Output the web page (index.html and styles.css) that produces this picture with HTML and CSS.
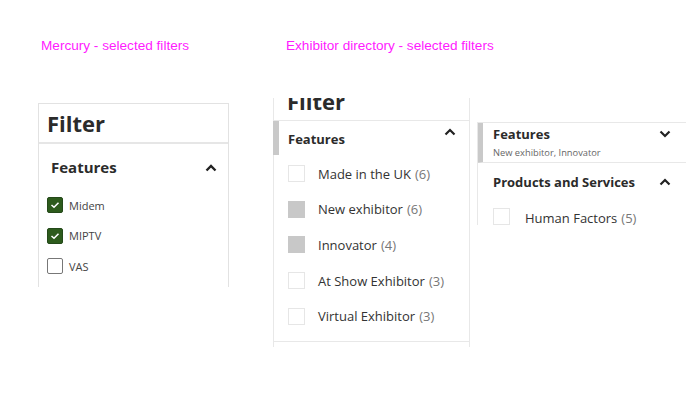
FILE: index.html
```html
<!DOCTYPE html>
<html>
<head>
<meta charset="utf-8">
<link rel="stylesheet" href="styles.css">
</head>
<body>
<div class="page">
  <section class="col col-mercury">
    <div class="caption">Mercury - selected filters</div>
    <div class="panel-m">
      <div class="m-head">Filter</div>
      <div class="m-section">
        <div class="m-section-head">
          <span>Features</span>
          <svg class="chev" width="12" height="8" viewBox="0 0 12 8"><polyline points="1.5,6.5 6,2 10.5,6.5" fill="none" stroke="#222" stroke-width="2.4"/></svg>
        </div>
        <div class="m-item"><span class="m-box checked"><svg width="10" height="8" viewBox="0 0 10 8"><polyline points="1.5,4 4,6.3 8.5,1.7" fill="none" stroke="#fff" stroke-width="1.5"/></svg></span>Midem</div>
        <div class="m-item"><span class="m-box checked"><svg width="10" height="8" viewBox="0 0 10 8"><polyline points="1.5,4 4,6.3 8.5,1.7" fill="none" stroke="#fff" stroke-width="1.5"/></svg></span>MIPTV</div>
        <div class="m-item"><span class="m-box"></span>VAS</div>
      </div>
    </div>
  </section>
  <section class="col col-exhib">
    <div class="caption">Exhibitor directory - selected filters</div>
    <div class="exhib-row">
      <div class="panel-e">
        <div class="e-head"><div class="e-head-text">Filter</div></div>
        <div class="e-section-head active">
          <span>Features</span>
          <svg class="chev-e" width="12" height="8" viewBox="0 0 12 8"><polyline points="1.5,6.5 6,2 10.5,6.5" fill="none" stroke="#222" stroke-width="2.2"/></svg>
        </div>
        <div class="e-items">
          <div class="e-item"><span class="e-box"></span>Made in the UK <span class="count">(6)</span></div>
          <div class="e-item"><span class="e-box sel"></span>New exhibitor <span class="count">(6)</span></div>
          <div class="e-item"><span class="e-box sel"></span>Innovator <span class="count">(4)</span></div>
          <div class="e-item"><span class="e-box"></span>At Show Exhibitor <span class="count">(3)</span></div>
          <div class="e-item"><span class="e-box"></span>Virtual Exhibitor <span class="count">(3)</span></div>
        </div>
        <div class="e-foot"></div>
      </div>
      <div class="panel-c">
        <div class="c-section-head active">
          <div class="c-title-row">
            <span>Features</span>
            <svg class="chev-c" width="12" height="8" viewBox="0 0 12 8"><polyline points="1.5,1.5 6,6 10.5,1.5" fill="none" stroke="#222" stroke-width="2.2"/></svg>
          </div>
          <div class="c-sub">New exhibitor, Innovator</div>
        </div>
        <div class="c-section">
          <div class="c-title-row c-title-2">
            <span>Products and Services</span>
            <svg class="chev-c" width="12" height="8" viewBox="0 0 12 8"><polyline points="1.5,6.5 6,2 10.5,6.5" fill="none" stroke="#222" stroke-width="2.2"/></svg>
          </div>
          <div class="c-item"><span class="e-box"></span>Human Factors <span class="count">(5)</span></div>
        </div>
      </div>
    </div>
  </section>
</div>
</body>
</html>
```

FILE: styles.css
```css
html, body {
  margin: 0;
  padding: 0;
  background: #fff;
}
body {
  width: 700px;
  height: 393px;
  overflow: hidden;
  font-family: "Open Sans", "Noto Sans", sans-serif;
  color: #333;
}
.page {
  display: flex;
  align-items: flex-start;
  padding-top: 38px;
}
.caption {
  font-family: "Liberation Sans", Arial, sans-serif;
  font-size: 13.6px;
  line-height: 15px;
  height: 15px;
  color: #ff1aff;
  white-space: nowrap;
}
.col-mercury {
  margin-left: 38px;
  width: 191px;
}
.col-mercury .caption {
  padding-left: 3px;
}
.panel-m {
  margin-top: 50px;
  box-sizing: border-box;
  height: 184px;
  border: 1px solid #e2e2e2;
  border-bottom: none;
}
.m-head {
  box-sizing: border-box;
  height: 40px;
  padding: 4px 0 0 8px;
  font-size: 22px;
  line-height: 30px;
  font-weight: 700;
  color: #2b2b2b;
  border-bottom: 2px solid #e6e6e6;
}
.m-section {
  padding: 12px 10px 0 8px;
}
.m-section-head {
  display: flex;
  align-items: center;
  justify-content: space-between;
  padding-left: 4px;
  height: 22px;
  font-size: 15px;
  font-weight: 700;
  color: #2b2b2b;
}
.m-section-head .chev {
  margin-right: 1px;
  margin-top: 1px;
}
.m-item {
  display: flex;
  align-items: center;
  height: 30.5px;
  font-size: 11px;
  color: #444;
}
.m-section-head + .m-item {
  margin-top: 12px;
}
.m-box {
  box-sizing: border-box;
  width: 16px;
  height: 16px;
  margin-right: 6px;
  border: 1px solid #777;
  border-radius: 2px;
  display: flex;
  align-items: center;
  justify-content: center;
  background: #fff;
}
.m-box.checked {
  background: #2d5b1c;
  border-color: #24491a;
}
.col-exhib {
  margin-left: 44px;
}
.col-exhib .caption {
  padding-left: 13px;
}
.exhib-row {
  display: flex;
  align-items: flex-start;
  margin-top: 45px;
}
.panel-e {
  box-sizing: border-box;
  width: 197px;
  height: 249px;
  border-left: 1px solid #e8e8e8;
  border-right: 1px solid #e8e8e8;
}
.e-head {
  height: 22px;
  overflow: hidden;
  border-bottom: 1px solid #e8e8e8;
}
.e-head-text {
  margin-top: -12px;
  padding-left: 13px;
  font-size: 22px;
  line-height: 30px;
  font-weight: 700;
  color: #2b2b2b;
}
.e-section-head {
  position: relative;
  display: flex;
  justify-content: space-between;
  height: 34px;
  padding: 0 13px 0 14px;
  font-size: 13px;
  font-weight: 700;
  color: #2b2b2b;
  line-height: 36px;
}
.e-section-head.active {
  border-left: 6px solid #c9c9c9;
  margin-left: -1px;
  padding-left: 9px;
}
.chev-e {
  margin-top: 7px;
}
.e-items {
  padding: 0 0 0 14px;
}
.e-item, .c-item {
  display: flex;
  align-items: center;
  height: 35.6px;
  font-size: 13px;
  color: #333;
  white-space: nowrap;
}
.e-items .e-item:first-child {
  margin-top: 1px;
}
.count {
  color: #777;
  margin-left: 4px;
}
.e-box {
  box-sizing: border-box;
  width: 17px;
  height: 17px;
  margin-right: 13px;
  border: 1px solid #e6e6e6;
  background: #fff;
  flex: none;
}
.e-box.sel {
  background: #c8c8c8;
  border-color: #c8c8c8;
}
.e-foot {
  margin-top: 7px;
  border-top: 1px solid #e8e8e8;
}
.panel-c {
  box-sizing: border-box;
  width: 209px;
  margin-left: 7px;
  margin-top: 24px;
  height: 103px;
  overflow: hidden;
  border-top: 1px solid #e8e8e8;
  border-left: 1px solid #e8e8e8;
}
.c-section-head {
  box-sizing: border-box;
  height: 40px;
  padding: 1px 15px 0 15px;
  border-bottom: 1px solid #e8e8e8;
}
.c-section-head.active {
  border-left: 6px solid #c9c9c9;
  margin-left: -1px;
  padding-left: 10px;
}
.c-title-row {
  display: flex;
  justify-content: space-between;
  align-items: center;
  height: 20px;
  font-size: 13px;
  font-weight: 700;
  color: #2b2b2b;
}
.c-sub {
  font-size: 9.3px;
  line-height: 12px;
  margin-top: 3px;
  color: #666;
}
.c-section {
  padding: 8px 15px 0 15px;
}
.c-title-2 {
  height: 22px;
}
.c-item {
  margin-top: 15px;
  height: 17px;
  align-items: flex-start;
  line-height: 20px;
}
.c-item .e-box {
  margin-right: 15px;
}
```
